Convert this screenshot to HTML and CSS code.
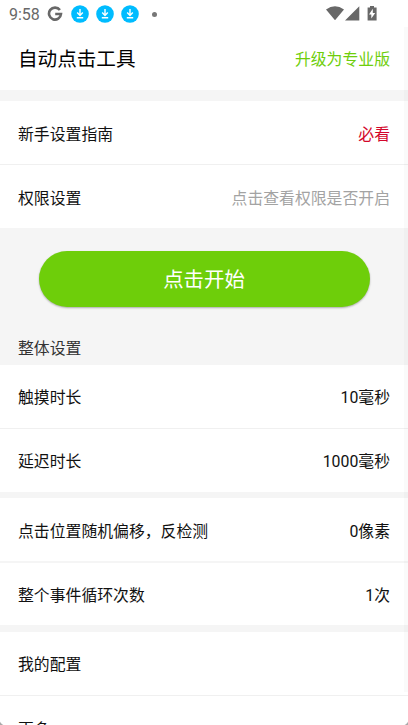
FILE: index.html
```html
<!DOCTYPE html>
<html lang="zh-CN">
<head>
<meta charset="utf-8">
<title>自动点击工具</title>
<link rel="stylesheet" href="styles.css">
</head>
<body>
<div class="screen">
  <div class="status">
    <span class="clock">9:58</span>
    <svg class="google" width="16" height="16" viewBox="0 0 16 16"><path d="M12.9 4.1A6 6 0 1 0 14 8H8.2" fill="none" stroke="#686868" stroke-width="2.6"/></svg>
    <svg class="dl" width="18" height="18" viewBox="0 0 18 18"><circle cx="9" cy="9" r="8.8" fill="#00bcff"/><path d="M9 4v6M6.2 7.6 9 10.4l2.8-2.8M5.8 12.8h6.4" fill="none" stroke="#fff" stroke-width="1.4"/></svg>
    <svg class="dl" width="18" height="18" viewBox="0 0 18 18"><circle cx="9" cy="9" r="8.8" fill="#00bcff"/><path d="M9 4v6M6.2 7.6 9 10.4l2.8-2.8M5.8 12.8h6.4" fill="none" stroke="#fff" stroke-width="1.4"/></svg>
    <svg class="dl" width="18" height="18" viewBox="0 0 18 18"><circle cx="9" cy="9" r="8.8" fill="#00bcff"/><path d="M9 4v6M6.2 7.6 9 10.4l2.8-2.8M5.8 12.8h6.4" fill="none" stroke="#fff" stroke-width="1.4"/></svg>
    <span class="dot"></span>
    <svg class="system" width="52" height="16" viewBox="0 0 52 16" fill="#686868"><path d="M0 3.4Q9-3 18 3.4L9 14.2zM19 14.4 33.3.2v14.2z"/><path d="M44 0h4v1.6h2.6V14.4h-9V1.6H44z"/><path d="M46.8 2.8 43 8.4h2.3v4L49.2 7h-2.4z" fill="#fff"/></svg>
  </div>
  <header class="header"><h1>自动点击工具</h1><span class="upgrade">升级为专业版</span></header>
  <section class="group guide">
    <div class="row"><span>新手设置指南</span><span class="must">必看</span></div>
    <div class="row"><span>权限设置</span><span class="hint">点击查看权限是否开启</span></div>
  </section>
  <button class="start">点击开始</button>
  <h2 class="caption">整体设置</h2>
  <section class="group">
    <div class="row"><span>触摸时长</span><span>10毫秒</span></div>
    <div class="row"><span>延迟时长</span><span>1000毫秒</span></div>
  </section>
  <section class="group offset">
    <div class="row"><span>点击位置随机偏移，反检测</span><span>0像素</span></div>
    <div class="row"><span>整个事件循环次数</span><span>1次</span></div>
  </section>
  <section class="group config">
    <div class="row"><span>我的配置</span></div>
    <div class="row"><span>更多</span></div>
  </section>
  <div class="scrollbar"></div>
  <div class="corner left"></div>
  <div class="corner right"></div>
</div>
</body>
</html>
```
FILE: styles.css
```css
* { box-sizing: border-box; }
body { margin: 0; overflow: hidden; }
.screen {
  position: relative;
  display: flex;
  flex-direction: column;
  width: 408px;
  height: 725px;
  overflow: hidden;
  background: #f5f5f5;
  color: #111;
  font: 15.85px/24px Roboto, "Noto Sans CJK SC", sans-serif;
}
.screen > * { flex-shrink: 0; }
.status {
  display: flex;
  align-items: center;
  height: 28px;
  padding: 0 30px 0 9px;
  background: #fff;
  color: #686868;
}
.clock { width: 32px; padding-top: 1px; font-size: 16px; }
.google { margin: 0 8px 0 6px; }
.dl { margin-right: 7px; }
.dot { width: 5px; height: 5px; margin-left: 6px; border-radius: 50%; background: #777; }
.system { margin: 0 0 0 auto; }
.header {
  display: flex;
  align-items: center;
  justify-content: space-between;
  height: 62px;
  padding: 0 18px;
  background: #fff;
}
h1 { margin: 0; padding-top: 2px; font-size: 19.6px; font-weight: 400; color: #000; }
.upgrade { color: #6ece0a; padding-top: 2px; }
.group { background: #fff; }
.guide { margin-top: 11px; }
.row {
  display: flex;
  align-items: center;
  justify-content: space-between;
  height: 63px;
  padding: 3px 18px 0;
}
.row + .row { height: 64px; border-top: 1px solid #f0f0f0; }
.guide .row { padding-top: 5px; }
.must { color: #d3062b; }
.hint { color: #a3a3a3; }
.start {
  width: 331px;
  height: 56px;
  margin: 23px 0 0 38.5px;
  padding: 0;
  border: 0;
  border-radius: 28px;
  background: #6ece0a;
  color: #fff;
  font: 20.4px/58px Roboto, "Noto Sans CJK SC", sans-serif;
  box-shadow: 0 1px 2px rgba(0, 0, 0, .3);
}
.caption {
  height: 58px;
  margin: 0;
  padding: 30px 18px 0;
  font-size: 15.85px;
  font-weight: 400;
  color: #333;
}
.offset { margin-top: 6px; }
.offset .row { padding-top: 5px; }
.offset .row + .row { border-top: 2px solid #f5f5f5; padding-top: 4px; }
.config { margin-top: 7px; }
.config .row + .row { padding-top: 5px; }
.scrollbar { position: absolute; top: 27px; right: 0; width: 4px; height: 665px; background: rgba(0, 0, 0, .02); }
.corner { position: absolute; bottom: 0; width: 6px; height: 6px; }
.left { left: 0; background: radial-gradient(circle at 100% 0, transparent 6px, #aaa 7px); }
.right { right: 0; background: radial-gradient(circle at 0 0, transparent 6px, #aaa 7px); }
```
